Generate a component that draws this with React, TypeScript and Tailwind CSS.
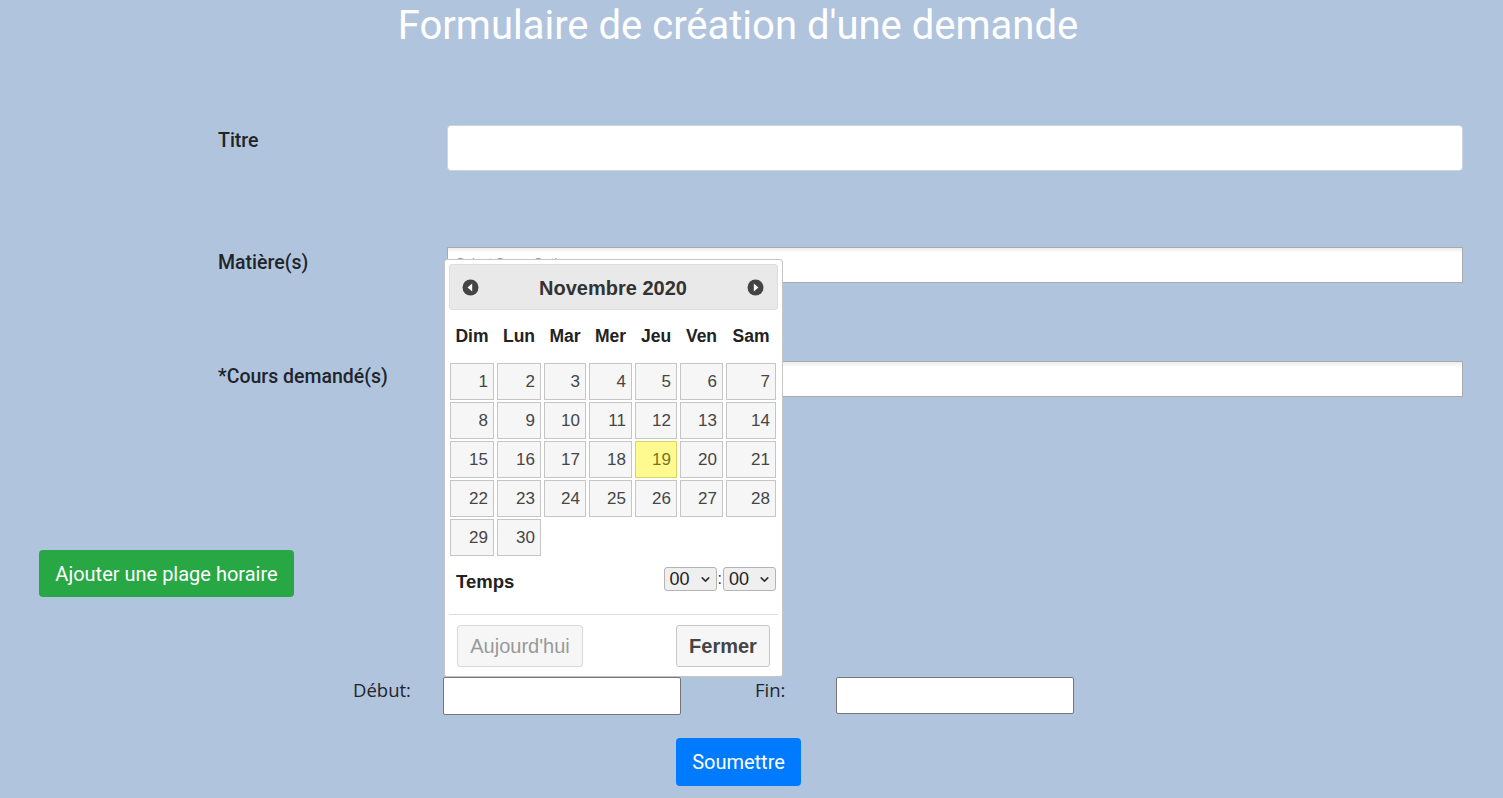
import { ChevronDown } from "lucide-react";

const days = Array.from({ length: 30 }, (_, i) => i + 1);
const weekDays = ["Dim", "Lun", "Mar", "Mer", "Jeu", "Ven", "Sam"];

function CircleArrow({ dir }: { dir: "prev" | "next" }) {
  return (
    <svg width="17" height="17" viewBox="0 0 16 16">
      <circle cx="8" cy="8" r="7.5" fill="#444444" />
      {dir === "prev" ? (
        <polygon points="9.6,4.2 9.6,11.8 5.2,8" fill="#ffffff" />
      ) : (
        <polygon points="6.4,4.2 6.4,11.8 10.8,8" fill="#ffffff" />
      )}
    </svg>
  );
}

function TimeSelect() {
  return (
    <div className="flex h-[24px] w-[53px] items-center justify-between rounded-[3px] border border-[#b4b4b4] bg-[#efefef] pl-[5px] pr-[4px] text-[18px] leading-none text-[#222]">
      <span>00</span>
      <ChevronDown size={13} strokeWidth={3} className="text-[#333]" />
    </div>
  );
}

function DatePicker() {
  return (
    <div className="absolute bottom-full left-[1px] z-10 w-[339px] rounded-[3px] border border-[#c5c5c5] bg-white p-[4px] font-['Liberation_Sans',Arial,sans-serif] text-[#333]">
      <div className="flex h-[46px] items-center justify-between rounded-[3px] border border-[#dddddd] bg-[#e9e9e9] pl-[12px] pr-[13px]">
        <CircleArrow dir="prev" />
        <span className="pt-[2px] text-[20px] font-bold text-[#333]">Novembre 2020</span>
        <CircleArrow dir="next" />
      </div>

      <div className="ml-[1px] grid h-[53px] grid-cols-[44px_44px_42px_43px_42px_43px_50px] items-center gap-x-[3px] pb-[1px] text-[17.5px] font-bold text-[#222]">
        {weekDays.map((d) => (
          <div key={d} className="text-center">
            {d}
          </div>
        ))}
      </div>

      <div className="ml-[1px] grid grid-cols-[44px_44px_42px_43px_42px_43px_50px] gap-x-[3px] gap-y-[2px]">
        {days.map((d) => (
          <div
            key={d}
            className={
              d === 19
                ? "flex h-[37px] items-center justify-end border border-[#dad55e] bg-[#fffa90] pr-[5px] text-[17px] text-[#777620]"
                : "flex h-[37px] items-center justify-end border border-[#c5c5c5] bg-[#f6f6f6] pr-[5px] text-[17px] text-[#454545]"
            }
          >
            {d}
          </div>
        ))}
      </div>

      <div className="mt-[11px] flex h-[24px] items-start justify-between pr-[2px]">
        <span className="ml-[7px] mt-[6px] text-[18.5px] font-bold leading-[18px] text-[#222]">Temps</span>
        <div className="flex items-center gap-[1px]">
          <TimeSelect />
          <span className="text-[16px] leading-none">:</span>
          <TimeSelect />
        </div>
      </div>

      <div className="mt-[23px] border-t border-[#dddddd]" />

      <div className="mt-[10px] mb-[5px] flex justify-between px-[8px]">
        <button className="h-[42px] w-[126px] rounded-[3px] border border-[#d8d8d8] bg-[#f6f6f6] text-[20px] text-[#999]">
          Aujourd'hui
        </button>
        <button className="h-[42px] w-[94px] rounded-[3px] border border-[#c5c5c5] bg-[#f6f6f6] text-[20px] font-bold text-[#454545]">
          Fermer
        </button>
      </div>
    </div>
  );
}

export default function App() {
  return (
    <div className="min-h-screen bg-[#b0c4de] pb-[12px] font-['Roboto',sans-serif] text-[#212529]">
      <h1 className="pr-[27px] pt-[2px] text-center text-[40px] font-normal leading-[48px] text-white">
        Formulaire de création d'une demande
      </h1>

      <div className="mt-[75px] pl-[218px]">
        <div className="flex items-start">
          <label className="mt-[2px] w-[229px] text-[19.5px] font-medium leading-[28px]">Titre</label>
          <div className="h-[46px] w-[1016px] rounded-[4px] border border-[#ced4da] bg-white" />
        </div>

        <div className="mt-[76px] flex items-start">
          <label className="mt-[2px] w-[229px] text-[19.5px] font-medium leading-[28px]">Matière(s)</label>
          <div className="h-[36px] w-[1016px] border border-[#aaaaaa] bg-[linear-gradient(#eeeeee_1%,#ffffff_15%)] pl-[8px] pt-[5px] font-['Liberation_Sans',Arial,sans-serif] text-[13px] text-[#999]">
            Select Some Options
          </div>
        </div>

        <div className="mt-[78px] flex items-start">
          <label className="mt-[2px] w-[229px] text-[19.5px] font-medium leading-[28px]">*Cours demandé(s)</label>
          <div className="h-[36px] w-[1016px] border border-[#aaaaaa] bg-[linear-gradient(#eeeeee_1%,#ffffff_15%)]" />
        </div>
      </div>

      <button className="ml-[39px] mt-[153px] h-[47px] w-[255px] rounded-[4px] bg-[#28a745] text-[20px] text-white">
        Ajouter une plage horaire
      </button>

      <div className="ml-[353px] mt-[80px] flex items-start font-['Open_Sans',sans-serif] text-[18.5px] leading-[24px] text-[#212529]">
        <label className="mt-[1px] w-[90px]">Début:</label>
        <div className="relative">
          <DatePicker />
          <div className="h-[38px] w-[238px] rounded-[2px] border border-[#767676] bg-white" />
        </div>
        <label className="ml-[74px] mt-[1px] w-[81px]">Fin:</label>
        <div className="h-[37px] w-[238px] rounded-[2px] border border-[#767676] bg-white" />
      </div>

      <button className="ml-[676px] mt-[23px] h-[48px] w-[125px] rounded-[4px] bg-[#007bff] text-[20px] text-white">
        Soumettre
      </button>
    </div>
  );
}
